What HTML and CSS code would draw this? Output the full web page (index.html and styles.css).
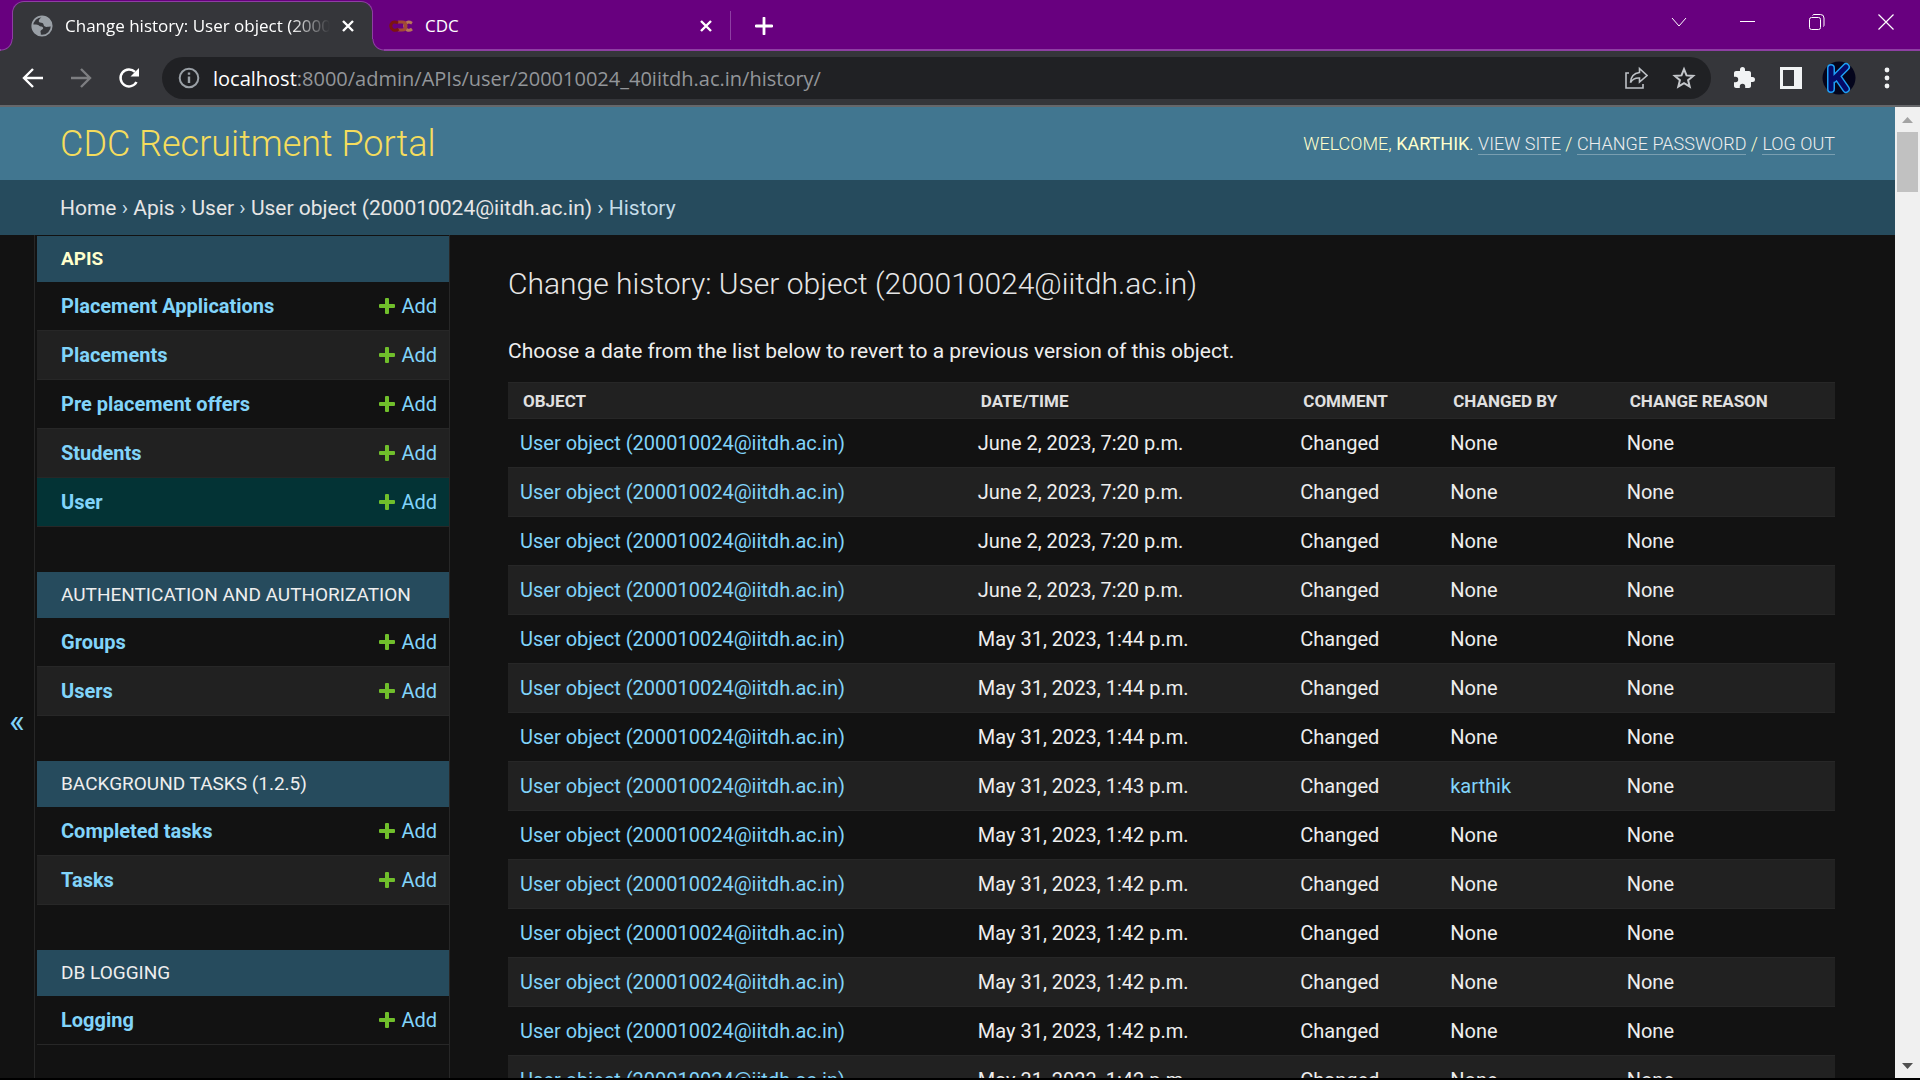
FILE: index.html
```html
<!DOCTYPE html>
<html lang="en">
<head>
<meta charset="utf-8">
<title>Change history: User object (200010024@iitdh.ac.in)</title>
<link rel="stylesheet" href="styles.css">
</head>
<body>
<svg class="defs" aria-hidden="true">
  <symbol id="plus" viewBox="0 0 16 16"><path fill="#70bf2b" d="M6 1Q6 0 7 0H9Q10 0 10 1V6H15Q16 6 16 7V9Q16 10 15 10H10V15Q10 16 9 16H7Q6 16 6 15V10H1Q0 10 0 9V7Q0 6 1 6H6Z"/></symbol>
  <symbol id="cross" viewBox="0 0 12 12"><path d="M1 1 11 11M11 1 1 11" fill="none" stroke="#fff" stroke-width="2.4"/></symbol>
</svg>

<div class="tabstrip">
  <div class="tab tab-active">
    <svg class="favicon" viewBox="0 0 22 22"><circle cx="11" cy="11" r="9.700" fill="#35363a" stroke="#9aa0a6" stroke-width="1.800"/><path fill="#9aa0a6" d="M11 1.300C9.500 3.500 7.500 4.500 7.800 6.500C8.200 8 10 7.300 11.500 8C13 8.700 12.200 10.500 13.500 11.300C15.500 12.500 17 11.500 20.700 11.500C21 6 17 1.300 11 1.300ZM1.500 9.500C4 9.500 6.500 9.200 8 10.500C9 12 12 11 12.200 13C12.300 14.800 10 14.500 9.500 16C9.200 17 10.500 18.500 9.500 20.500C5 20 1 15.500 1.500 9.500Z"/></svg>
    <span class="tab-title tab-fade">Change history: User object (20001</span>
    <button class="icon-btn" aria-label="Close tab"><svg width="12" height="12"><use href="#cross"/></svg></button>
  </div>
  <div class="tab">
    <svg class="favicon favicon-wide" viewBox="0 0 24 12" fill="none" stroke-width="3"><path stroke="#b87858" d="M23 3.200Q18 .500 16 4.500 15 8 18 9.800 20.500 11 23 9"/><path stroke="#a24a35" d="M9 2H13Q17 2 17 6T13 10H9M15 6H18"/><path stroke="#7c1510" d="M9 3Q4 .500 2 4.500 1 8 4 9.800 7 11 9.500 9"/></svg>
    <span class="tab-title">CDC</span>
    <button class="icon-btn" aria-label="Close tab"><svg width="12" height="12"><use href="#cross"/></svg></button>
  </div>
  <button class="icon-btn new-tab" aria-label="New tab"><svg width="18" height="18" viewBox="0 0 18 18"><path d="M9 1V17M1 9H17" stroke="#fff" stroke-width="2.800" stroke-linecap="round"/></svg></button>
  <div class="window-controls">
    <button class="icon-btn" aria-label="Search tabs"><svg width="16" height="16" viewBox="0 0 16 16"><path d="M1 4 8 12 15 4" fill="none" stroke="#fff"/></svg></button>
    <button class="icon-btn" aria-label="Minimize"><svg width="16" height="16" viewBox="0 0 16 16"><path d="M0 7.500H15" stroke="#fff"/></svg></button>
    <button class="icon-btn" aria-label="Restore"><svg width="16" height="16" viewBox="0 0 16 16" fill="none" stroke="#fff"><rect x=".5" y="3.500" width="11" height="12" rx="2"/><path d="M3.500 1.500Q4 .500 5 .500H11.500Q15 .500 15 4V11Q15 12 14.500 12.500"/></svg></button>
    <button class="icon-btn" aria-label="Close"><svg width="16" height="16" viewBox="0 0 16 16"><path d="M.5 .5 15.500 15.500M15.500 .5 .5 15.500" stroke="#fff" stroke-width="1.200"/></svg></button>
  </div>
</div>

<div class="toolbar">
  <div class="nav-buttons">
    <button class="icon-btn" aria-label="Back"><svg width="22" height="22" viewBox="0 0 22 22"><path d="M21 11H2.500M11 2 2 11 11 20" fill="none" stroke="#fff" stroke-width="2.400"/></svg></button>
    <button class="icon-btn" aria-label="Forward"><svg width="22" height="22" viewBox="0 0 22 22"><path d="M1 11H19.500M11 2 20 11 11 20" fill="none" stroke="#7d7e81" stroke-width="2.400"/></svg></button>
    <button class="icon-btn" aria-label="Reload"><svg width="22" height="22" viewBox="0 0 22 22"><path d="M18.500 15A8.500 8.500 0 1 1 17 4.800" fill="none" stroke="#fff" stroke-width="2.500"/><path d="M21 1V9.500H12.500Z" fill="#fff"/></svg></button>
  </div>
  <div class="omnibox">
    <svg width="22" height="22" viewBox="0 0 22 22"><circle cx="11" cy="11" r="9.300" fill="none" stroke="#9aa0a6" stroke-width="2"/><path d="M11 9.500V16M11 5.500V7.800" stroke="#9aa0a6" stroke-width="2.400"/></svg>
    <label class="url url-host" for="url">localhost</label>
    <input class="url url-path" id="url" type="text" value=":8000/admin/APIs/user/200010024_40iitdh.ac.in/history/">
    <button class="icon-btn" aria-label="Share"><svg width="24" height="24" viewBox="0 0 24 24" fill="none" stroke="#bdc1c6" stroke-width="1.600"><path d="M5 7H2V22H19V18"/><path d="M15.500 2.500 23 9.500 15.500 16V12Q9.500 11.500 6.500 16.500 7 7.500 15.500 6.500Z"/></svg></button>
    <button class="icon-btn" aria-label="Bookmark"><svg width="24" height="24" viewBox="0 0 24 24"><path d="M12 3.200 14.500 9.400 21.200 9.900 16.100 14.200 17.700 20.700 12 17.200 6.300 20.700 7.900 14.200 2.800 9.900 9.500 9.400Z" fill="none" stroke="#c4c7cb" stroke-width="2"/></svg></button>
  </div>
  <div class="actions">
    <button class="icon-btn" aria-label="Extensions"><svg width="24" height="24" viewBox="0 0 24 24"><path fill="#f1f3f4" d="M20.500 11H19V7c0-1.100-.9-2-2-2h-4V3.500a2.500 2.500 0 0 0-5 0V5H4c-1.100 0-2 .9-2 2v3.800h1.500a2.700 2.700 0 0 1 0 5.400H2V20c0 1.100.9 2 2 2h3.800v-1.500a2.700 2.700 0 0 1 5.400 0V22H17c1.100 0 2-.9 2-2v-4h1.500a2.500 2.500 0 0 0 0-5z"/></svg></button>
    <button class="icon-btn" aria-label="Side panel"><svg width="22" height="22" viewBox="0 0 22 22"><path fill="#f1f3f4" fill-rule="evenodd" d="M0 0H22V22H0ZM3 3V19H14V3Z"/></svg></button>
    <button class="icon-btn" aria-label="Profile"><svg width="34" height="34" viewBox="0 0 34 34"><circle cx="17" cy="17" r="16.500" fill="#04051c"/><path d="M9 7V28M24 6 12 18M15 15 24 28" fill="none" stroke="#1ea0f5" stroke-width="8" stroke-linecap="round"/><path d="M9 7V28M24 6 12 18M15 15 24 28" fill="none" stroke="#050a68" stroke-width="5" stroke-linecap="round"/></svg></button>
    <button class="icon-btn" aria-label="Menu"><svg width="6" height="22" viewBox="0 0 6 22" fill="#f1f3f4"><circle cx="3" cy="3" r="2.400"/><circle cx="3" cy="11" r="2.400"/><circle cx="3" cy="19" r="2.400"/></svg></button>
  </div>
</div>

<div class="viewport">
  <div class="page">
    <header class="header">
      <h1 class="branding"><a href="#">CDC Recruitment Portal</a></h1>
      <div class="user-tools">Welcome, <strong>Karthik</strong>. <a href="#">View site</a> / <a href="#">Change password</a> / <a href="#">Log out</a></div>
    </header>
    <nav class="breadcrumbs"><a href="#">Home</a> › <a href="#">Apis</a> › <a href="#">User</a> › <a href="#">User object (200010024@iitdh.ac.in)</a> › History</nav>
    <div class="main">
      <button class="nav-toggle" aria-label="Toggle navigation">«</button>
      <nav class="sidebar">
        <table class="module">
          <caption class="current-app"><a href="#">Apis</a></caption>
          <tr><th scope="row"><a href="#">Placement Applications</a></th><td><a class="add" href="#"><svg><use href="#plus"/></svg>Add</a></td></tr>
          <tr><th scope="row"><a href="#">Placements</a></th><td><a class="add" href="#"><svg><use href="#plus"/></svg>Add</a></td></tr>
          <tr><th scope="row"><a href="#">Pre placement offers</a></th><td><a class="add" href="#"><svg><use href="#plus"/></svg>Add</a></td></tr>
          <tr><th scope="row"><a href="#">Students</a></th><td><a class="add" href="#"><svg><use href="#plus"/></svg>Add</a></td></tr>
          <tr class="current-model"><th scope="row"><a href="#">User</a></th><td><a class="add" href="#"><svg><use href="#plus"/></svg>Add</a></td></tr>
        </table>
        <table class="module">
          <caption><a href="#">Authentication and Authorization</a></caption>
          <tr><th scope="row"><a href="#">Groups</a></th><td><a class="add" href="#"><svg><use href="#plus"/></svg>Add</a></td></tr>
          <tr><th scope="row"><a href="#">Users</a></th><td><a class="add" href="#"><svg><use href="#plus"/></svg>Add</a></td></tr>
        </table>
        <table class="module">
          <caption><a href="#">Background Tasks (1.2.5)</a></caption>
          <tr><th scope="row"><a href="#">Completed tasks</a></th><td><a class="add" href="#"><svg><use href="#plus"/></svg>Add</a></td></tr>
          <tr><th scope="row"><a href="#">Tasks</a></th><td><a class="add" href="#"><svg><use href="#plus"/></svg>Add</a></td></tr>
        </table>
        <table class="module">
          <caption><a href="#">DB Logging</a></caption>
          <tr><th scope="row"><a href="#">Logging</a></th><td><a class="add" href="#"><svg><use href="#plus"/></svg>Add</a></td></tr>
        </table>
      </nav>
      <main class="content">
        <h2>Change history: User object (200010024@iitdh.ac.in)</h2>
        <p>Choose a date from the list below to revert to a previous version of this object.</p>
        <table class="history">
          <colgroup><col class="col-object"><col class="col-date"><col class="col-comment"><col class="col-user"><col></colgroup>
          <thead><tr><th scope="col">Object</th><th scope="col">Date/time</th><th scope="col">Comment</th><th scope="col">Changed by</th><th scope="col">Change reason</th></tr></thead>
          <tbody>
            <tr><td><a href="#">User object (200010024@iitdh.ac.in)</a></td><td>June 2, 2023, 7:20 p.m.</td><td>Changed</td><td>None</td><td>None</td></tr>
            <tr><td><a href="#">User object (200010024@iitdh.ac.in)</a></td><td>June 2, 2023, 7:20 p.m.</td><td>Changed</td><td>None</td><td>None</td></tr>
            <tr><td><a href="#">User object (200010024@iitdh.ac.in)</a></td><td>June 2, 2023, 7:20 p.m.</td><td>Changed</td><td>None</td><td>None</td></tr>
            <tr><td><a href="#">User object (200010024@iitdh.ac.in)</a></td><td>June 2, 2023, 7:20 p.m.</td><td>Changed</td><td>None</td><td>None</td></tr>
            <tr><td><a href="#">User object (200010024@iitdh.ac.in)</a></td><td>May 31, 2023, 1:44 p.m.</td><td>Changed</td><td>None</td><td>None</td></tr>
            <tr><td><a href="#">User object (200010024@iitdh.ac.in)</a></td><td>May 31, 2023, 1:44 p.m.</td><td>Changed</td><td>None</td><td>None</td></tr>
            <tr><td><a href="#">User object (200010024@iitdh.ac.in)</a></td><td>May 31, 2023, 1:44 p.m.</td><td>Changed</td><td>None</td><td>None</td></tr>
            <tr><td><a href="#">User object (200010024@iitdh.ac.in)</a></td><td>May 31, 2023, 1:43 p.m.</td><td>Changed</td><td><a href="#">karthik</a></td><td>None</td></tr>
            <tr><td><a href="#">User object (200010024@iitdh.ac.in)</a></td><td>May 31, 2023, 1:42 p.m.</td><td>Changed</td><td>None</td><td>None</td></tr>
            <tr><td><a href="#">User object (200010024@iitdh.ac.in)</a></td><td>May 31, 2023, 1:42 p.m.</td><td>Changed</td><td>None</td><td>None</td></tr>
            <tr><td><a href="#">User object (200010024@iitdh.ac.in)</a></td><td>May 31, 2023, 1:42 p.m.</td><td>Changed</td><td>None</td><td>None</td></tr>
            <tr><td><a href="#">User object (200010024@iitdh.ac.in)</a></td><td>May 31, 2023, 1:42 p.m.</td><td>Changed</td><td>None</td><td>None</td></tr>
            <tr><td><a href="#">User object (200010024@iitdh.ac.in)</a></td><td>May 31, 2023, 1:42 p.m.</td><td>Changed</td><td>None</td><td>None</td></tr>
            <tr><td><a href="#">User object (200010024@iitdh.ac.in)</a></td><td>May 31, 2023, 1:42 p.m.</td><td>Changed</td><td>None</td><td>None</td></tr>
          </tbody>
        </table>
      </main>
    </div>
  </div>
  <div class="scrollbar" aria-hidden="true">
    <svg width="25" height="25" viewBox="0 0 25 25"><path fill="#a3a3a3" d="M7 16 12.500 10 18 16Z"/></svg>
    <div class="thumb"></div>
    <svg class="scroll-down" width="25" height="25" viewBox="0 0 25 25"><path fill="#505050" d="M7 10H18L12.500 16Z"/></svg>
  </div>
</div>
</body>
</html>
```
FILE: styles.css
```css
:root {
  --purple: #68007f;
  --tab-line: #8e3fa3;
  --chrome: #35363a;
  --bg: #121212;
  --bg-alt: #212121;
  --hairline: #272727;
  --header: #417690;
  --section: #264b5d;
  --link: #81d4fa;
}

* { box-sizing: border-box; }

body {
  margin: 0;
  height: 100vh;
  display: flex;
  flex-direction: column;
  overflow: hidden;
  background: #000;
  color: #eee;
  font-family: Roboto, "Liberation Sans", sans-serif;
  font-size: 21px;
}

a { color: var(--link); text-decoration: none; }
.defs { display: none; }
svg { display: block; flex: none; }

.icon-btn {
  display: flex;
  padding: 0;
  border: 0;
  background: none;
}

/* Tab strip */
.tabstrip {
  display: flex;
  align-items: stretch;
  height: 51px;
  flex: none;
  padding-left: 12px;
  background: linear-gradient(var(--tab-line), var(--tab-line)) bottom / 100% 2px no-repeat var(--purple);
  font-family: "Open Sans", "Noto Sans", sans-serif;
  font-size: 17px;
}

.tab {
  display: flex;
  align-items: center;
  width: 357px;
  padding: 0 18px 0 16px;
  color: #fff;
}

.tab-active {
  position: relative;
  width: 361px;
  margin-top: 1px;
  padding-left: 18px;
  padding-bottom: 2px;
  border: 1px solid var(--tab-line);
  border-bottom: 0;
  border-radius: 12px 12px 0 0;
  background: var(--chrome);
}

.tab-active::before,
.tab-active::after {
  content: "";
  position: absolute;
  bottom: 0;
  width: 12px;
  height: 12px;
}

.tab-active::before {
  left: -12px;
  background: radial-gradient(circle at 0 0, var(--purple) 10px, var(--tab-line) 11px, var(--chrome) 12px);
}

.tab-active::after {
  right: -12px;
  background: radial-gradient(circle at 100% 0, var(--purple) 10px, var(--tab-line) 11px, var(--chrome) 12px);
}

.favicon { width: 22px; height: 22px; }
.favicon-wide { width: 24px; height: 12px; }

.tab-title {
  flex: 1;
  min-width: 0;
  margin: 0 12px;
  overflow: hidden;
  white-space: nowrap;
}

.tab-fade {
  -webkit-mask-image: linear-gradient(to left, transparent, #000 40px);
  mask-image: linear-gradient(to left, transparent, #000 40px);
}

.new-tab {
  align-items: center;
  margin: 11px 0;
  padding-left: 24px;
  border-left: 1px solid var(--tab-line);
}

.window-controls {
  display: flex;
  gap: 53px;
  margin-left: auto;
  padding: 14px 26px 0 0;
}

/* Toolbar */
.toolbar {
  display: flex;
  align-items: center;
  height: 56px;
  flex: none;
  padding: 0 30px 0 22px;
  background: var(--chrome);
  border-bottom: 2px solid #66676a;
}

.nav-buttons { display: flex; gap: 26px; margin-right: 22px; }

.omnibox {
  display: flex;
  align-items: center;
  flex: 1;
  height: 42px;
  padding: 0 15px 0 16px;
  border-radius: 21px;
  background: #202124;
}

.omnibox .icon-btn + .icon-btn { margin-left: 24px; }

.url {
  padding: 1px 0 0;
  font-family: "Open Sans", "Noto Sans", sans-serif;
  font-size: 20px;
  line-height: 28px;
}

.url-host { margin-left: 13px; color: #fff; }

.url-path {
  flex: 1;
  min-width: 0;
  border: 0;
  background: none;
  color: #93969a;
}

.actions { display: flex; align-items: center; gap: 24px; margin-left: 21px; }
.actions .icon-btn:nth-child(n+3) { margin-left: -4px; }
.actions .icon-btn:last-child { margin-left: 4px; }

/* Page viewport */
.viewport {
  display: flex;
  flex: 1;
  min-height: 0;
  margin-bottom: 2px;
}

.page {
  flex: 1;
  min-width: 0;
  overflow: hidden;
  background: var(--bg);
}

.scrollbar {
  display: flex;
  flex-direction: column;
  width: 25px;
  background: #f0f0f0;
}

.thumb { height: 60px; margin: 0 2px; background: #c1c1c1; }
.scroll-down { margin-top: auto; }

.header {
  display: flex;
  align-items: center;
  justify-content: space-between;
  height: 73px;
  padding: 0 60px;
  background: var(--header);
}

.branding { margin: 0; font-size: 36px; font-weight: 300; }
.branding a { color: #f5dd5d; }

.user-tools {
  color: #ffc;
  font-size: 18px;
  font-weight: 300;
  line-height: 20px;
  text-transform: uppercase;
}

.user-tools a { color: #eee; border-bottom: 1px solid #799eb0; }

.breadcrumbs {
  padding: 16px 60px 14px;
  background: var(--section);
  color: #c4dce8;
  line-height: 25px;
}

.breadcrumbs a { color: #e6e6e6; }

.main { display: flex; align-items: flex-start; }

.nav-toggle {
  width: 35px;
  min-height: calc(100vh - 109px);
  padding: 0;
  border: 0;
  border-right: 1px solid var(--hairline);
  background: var(--bg);
  color: var(--link);
  font: 33px/30px Roboto, "Liberation Sans", sans-serif;
}

/* Sidebar */
.sidebar {
  width: 415px;
  min-height: calc(100vh - 109px);
  padding: 1px 0 0 2px;
  border-right: 1px solid var(--hairline);
}

.module {
  width: 100%;
  margin-bottom: 45px;
  border-spacing: 0;
  font-size: 20px;
  line-height: 24px;
}

.module caption {
  padding: 12px 24px;
  background: var(--section);
  font-size: 19px;
  line-height: 22px;
  text-align: left;
  text-transform: uppercase;
}

.module caption a { color: #eee; }
.module .current-app { font-weight: 700; }
.module .current-app a { color: #ffc; }

.module th,
.module td {
  padding: 12px;
  border-bottom: 1px solid var(--hairline);
  text-align: left;
}

.module th { padding-left: 24px; }
.module tr:nth-child(even) { background: var(--bg-alt); }
.module .current-model { background: #033335; }

.add {
  display: flex;
  align-items: center;
  justify-content: flex-end;
  gap: 6px;
}

.add svg { width: 16px; height: 16px; }

/* Content */
.content {
  flex: 1;
  min-width: 0;
  padding: 31px 60px 0 58px;
}

.content h2 {
  margin: 0 0 31px;
  color: #e6e6e6;
  font-size: 30px;
  font-weight: 300;
  line-height: 36px;
}

.content p { margin: 0 0 13px; line-height: 36px; }

.history {
  width: 100%;
  table-layout: fixed;
  border-spacing: 0;
  font-size: 20px;
  line-height: 24px;
}

.col-object { width: 34.5%; }
.col-date { width: 24.3%; }
.col-comment { width: 11.3%; }
.col-user { width: 13.3%; }

.history th {
  padding: 7px 15px 6px;
  border: solid var(--hairline);
  border-width: 1px 0;
  background: var(--bg-alt);
  color: #e0e0e0;
  font-size: 17px;
  line-height: 22px;
  text-align: left;
  text-transform: uppercase;
}

.history td { padding: 12px; border-bottom: 1px solid var(--hairline); }
.history tbody tr:nth-child(even) { background: var(--bg-alt); }
```
